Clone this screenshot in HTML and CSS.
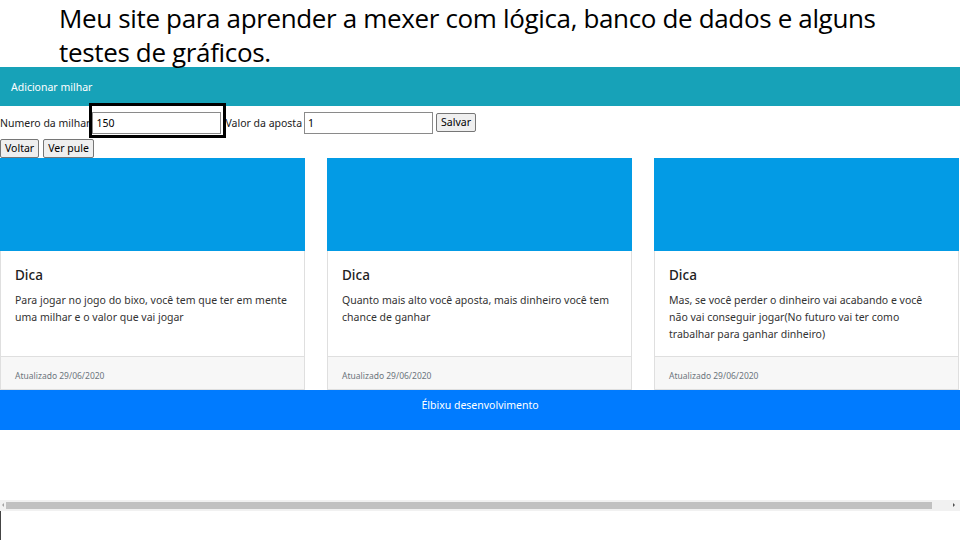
FILE: index.html
```html
<!DOCTYPE html>
<html lang="pt-BR">
<head>
<meta charset="utf-8">
<title>Milhar</title>
<link rel="stylesheet" href="styles.css">
</head>
<body>
<h1 class="intro">Meu site para aprender a mexer com lógica, banco de dados e alguns testes de gráficos.</h1>
<nav class="topbar">Adicionar milhar</nav>
<form class="form-row">
  <label class="lbl">Numero da milhar</label>
  <span class="mark"><input class="field" type="text" value="150"></span>
  <label class="lbl">Valor da aposta</label>
  <input class="field" type="text" value="1">
  <button class="btn" type="button">Salvar</button>
</form>
<div class="btn-row">
  <button class="btn" type="button">Voltar</button>
  <button class="btn" type="button">Ver pule</button>
</div>
<section class="cards">
  <article class="card">
    <div class="card-img"></div>
    <div class="card-body">
      <h2 class="card-title">Dica</h2>
      <p class="card-text">Para jogar no jogo do bixo, você tem que ter em mente uma milhar e o valor que vai jogar</p>
    </div>
    <div class="card-foot">Atualizado 29/06/2020</div>
  </article>
  <article class="card">
    <div class="card-img"></div>
    <div class="card-body">
      <h2 class="card-title">Dica</h2>
      <p class="card-text">Quanto mais alto você aposta, mais dinheiro você tem chance de ganhar</p>
    </div>
    <div class="card-foot">Atualizado 29/06/2020</div>
  </article>
  <article class="card">
    <div class="card-img"></div>
    <div class="card-body">
      <h2 class="card-title">Dica</h2>
      <p class="card-text">Mas, se você perder o dinheiro vai acabando e você não vai conseguir jogar(No futuro vai ter como trabalhar para ganhar dinheiro)</p>
    </div>
    <div class="card-foot">Atualizado 29/06/2020</div>
  </article>
</section>
<footer class="footer">Élbixu desenvolvimento</footer>
<div class="scrollbar">
  <span class="arrow arrow-left"></span>
  <span class="thumb"></span>
  <span class="arrow arrow-right"></span>
</div>
<div class="edge"></div>
</body>
</html>
```
FILE: styles.css
```css
html, body {
  margin: 0;
  padding: 0;
  background: #fff;
}
body {
  font-family: "Noto Sans", "Open Sans", sans-serif;
  color: #212529;
  width: 960px;
  height: 540px;
  overflow: hidden;
}
.intro {
  margin: 0;
  padding: 1px 0 0 59px;
  width: 840px;
  font-family: "Open Sans", sans-serif;
  font-weight: 400;
  font-size: 26px;
  letter-spacing: -0.35px;
  line-height: 34px;
  height: 66px;
  color: #000;
  position: relative;
  z-index: 2;
}
.topbar {
  background: #17a2b8;
  color: #fff;
  height: 39px;
  display: flex;
  align-items: center;
  padding-left: 11px;
  font-size: 10.5px;
}
.form-row {
  display: flex;
  align-items: center;
  margin: 5px 0 0;
  height: 23px;
  font-size: 10.5px;
  color: #222;
}
.lbl {
  margin-right: 2px;
}
.mark {
  position: relative;
  display: inline-flex;
  margin-right: 4px;
}
.mark::after {
  content: "";
  position: absolute;
  left: -3px;
  top: -9px;
  width: 131px;
  height: 29px;
  border: 3px solid #000;
}
.field {
  box-sizing: border-box;
  width: 129px;
  height: 22px;
  border: 1px solid #8a8a8a;
  padding: 0 3px;
  font-family: inherit;
  font-size: 10.5px;
  color: #000;
  outline: none;
}
.form-row .field + .btn {
  margin-left: 3px;
}
.btn {
  box-sizing: border-box;
  height: 19px;
  padding: 0 4px;
  border: 1px solid #767676;
  border-radius: 2px;
  background: #efefef;
  font-family: inherit;
  font-size: 10.5px;
  color: #000;
  line-height: 17px;
}
.btn-row {
  display: flex;
  gap: 4px;
  margin-top: 5px;
  height: 19px;
}
.cards {
  display: grid;
  grid-template-columns: 305px 305px 305px;
  column-gap: 22px;
  margin-top: 0;
}
.card {
  display: flex;
  flex-direction: column;
  border: 1px solid #dfdfdf;
  border-top: none;
  height: 232px;
  box-sizing: border-box;
}
.card-img {
  background: #039be5;
  height: 93px;
  margin: 0 -1px;
}
.card-body {
  flex: 1;
  padding: 14px 15.5px 0 14px;
}
.card-title {
  margin: 0 0 6px;
  font-size: 13.5px;
  font-weight: 500;
  line-height: 21px;
  color: #222;
}
.card-text {
  margin: 0;
  font-size: 10.5px;
  line-height: 17px;
  color: #333;
}
.card-foot {
  height: 33px;
  border-top: 1px solid #dfdfdf;
  background: #f7f7f7;
  display: flex;
  align-items: center;
  padding: 4px 0 0 14px;
  font-size: 8.5px;
  color: #6c757d;
  box-sizing: border-box;
}
.footer {
  background: #007bff;
  color: #fff;
  height: 40px;
  display: flex;
  justify-content: center;
  align-items: center;
  font-size: 10.5px;
  padding-bottom: 10px;
  box-sizing: border-box;
}
.scrollbar {
  margin-top: 70px;
  height: 11px;
  background: #f1f1f1;
  display: flex;
  align-items: center;
}
.arrow {
  width: 6px;
  height: 11px;
  position: relative;
}
.arrow-left::before,
.arrow-right::before {
  content: "";
  position: absolute;
  top: 3px;
  border-top: 2.5px solid transparent;
  border-bottom: 2.5px solid transparent;
}
.arrow-left::before {
  left: 2px;
  border-right: 2.5px solid #a3a3a3;
}
.arrow-right::before {
  left: 2px;
  border-left: 2.5px solid #505050;
}
.thumb {
  flex: 1;
  height: 7px;
  background: #c1c1c1;
  margin: 0 12px 0 0;
}
.arrow-right {
  width: 16px;
}
.arrow-right::before {
  left: 9px;
}
.edge {
  width: 1px;
  height: 29px;
  background: #444;
}
```
